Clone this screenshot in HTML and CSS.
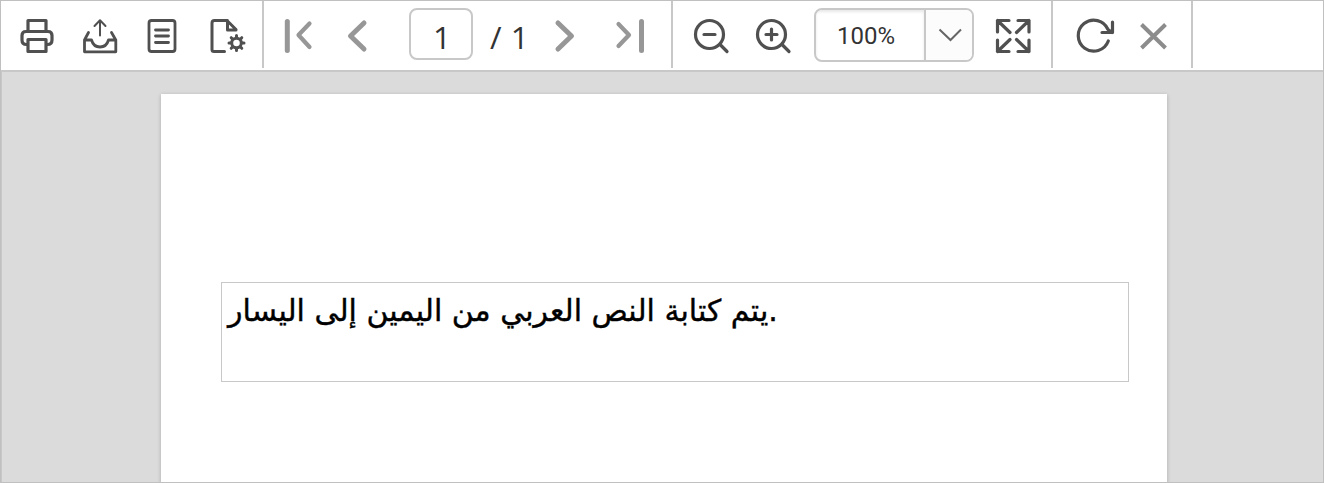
FILE: index.html
```
<!DOCTYPE html>
<html lang="en">
<head>
<meta charset="utf-8">
<title>Report Viewer</title>
<link rel="stylesheet" href="styles.css">
</head>
<body>
<div class="viewer">
  <div class="toolbar">
    <div class="group group-document">
      <svg class="icon" viewBox="0 0 40 40"><path d="M11 15V4.500H29V15M11 28.500H9.500Q5 28.500 5 24V19.500Q5 15.500 9 15.500H31Q35 15.500 35 19.500V24Q35 28.500 30.500 28.500H29M11 23.500H29V35.500H11Z"/></svg>
      <svg class="icon export" viewBox="0 0 40 40"><path d="M8.500 16.500L4.500 24V35.800H35.800V24L31.500 16.500M4.500 24H11.500Q13.500 31 20 31Q26.500 31 28.500 24H35.500"/><path class="thin" d="M20 19.500V5M14.500 10L20 4.300L25.500 10"/></svg>
      <svg class="icon params" viewBox="0 0 40 40"><rect x="7" y="4.500" width="26" height="31" rx="2.500"/><path d="M13.500 14H26.500M13.500 20H26.500M13.500 26.500H26.500"/></svg>
      <svg class="icon setup" viewBox="0 0 40 40"><path d="M16.500 35.500H6Q4 35.500 4 33.500V7Q4 4.500 6.500 4.500H19L28 13.500V14H19.500V4.500"/><circle cx="28.500" cy="27" r="4.800"/><path d="M28.500 21.500V19.500M28.500 32.500V34.500M23 27H21M34 27H36M24.600 23.100L23.200 21.700M32.400 23.100L33.800 21.700M24.600 30.900L23.200 32.300M32.400 30.900L33.800 32.300"/></svg>
    </div>
    <div class="group group-pages">
      <svg class="icon nav first" viewBox="0 0 40 40"><path class="bar" d="M9.300 5.500V34.500"/><path d="M31.500 7.500L20.500 19L31.500 31"/></svg>
      <svg class="icon nav wide prev" viewBox="0 0 40 40"><path d="M26 7L12.500 20L26 33"/></svg>
      <div class="page-input">1</div>
      <div class="page-total">/ 1</div>
      <svg class="icon nav wide next" viewBox="0 0 40 40"><path d="M13 7L26.500 20L13 33"/></svg>
      <svg class="icon nav last" viewBox="0 0 40 40"><path d="M10.500 8L21 19L10.500 30"/><path class="bar" d="M33.500 5.500V34.500"/></svg>
    </div>
    <div class="group group-zoom">
      <svg class="icon zoom-out" viewBox="0 0 40 40"><circle cx="18.500" cy="18.500" r="14"/><path d="M13 18.500H24M29 28.500L36 35.500"/></svg>
      <svg class="icon zoom-in" viewBox="0 0 40 40"><circle cx="18.500" cy="18.500" r="14"/><path d="M13 18.500H24M18.500 13V24M29 28.500L36 35.500"/></svg>
      <div class="zoom-select">
        <span class="zoom-value">100%</span>
        <span class="zoom-arrow"><svg class="chevron" viewBox="0 0 24 14"><path d="M1.500 1.500L12.500 12L23 1.500"/></svg></span>
      </div>
      <svg class="icon fullscreen" viewBox="0 0 40 40"><path d="M16 4.500H4.500V16M4.500 4.500L17 16.500M25 4.500H36V16M36 4.500L23.500 16.500M4.500 24V35.500H16M4.500 35.500L17 23.500M36 24V35.500H25M36 35.500L23.500 23.500"/></svg>
    </div>
    <div class="group group-status">
      <svg class="icon refresh" viewBox="0 0 40 40"><path d="M33.300 25A15.500 15.500 0 1 1 33 13.500L37 16.500M37.500 6V16.500H27"/></svg>
      <svg class="icon stop" viewBox="0 0 40 40"><path d="M8.500 8.500L32.500 32M32.500 8.500L8.500 32"/></svg>
    </div>
  </div>
  <div class="canvas">
    <div class="sheet">
      <div class="textbox">يتم كتابة النص العربي من اليمين إلى اليسار.</div>
    </div>
  </div>
</div>
</body>
</html>
```
FILE: styles.css
```
* { box-sizing: border-box; }
body { margin: 0; }
.viewer {
  display: flex;
  flex-direction: column;
  height: 483px;
  overflow: hidden;
  border: 1px solid #c0c0c0;
  background: #dbdbdb;
}
.toolbar {
  display: flex;
  flex: none;
  height: 71px;
  background: #fff;
  border-bottom: 2px solid #c8c8c8;
}
.group {
  display: flex;
  align-items: center;
  height: 67px;
  padding-top: 3px;
  border-right: 2px solid #c8c8c8;
}
.group-document { width: 263px; padding-left: 16px; }
.group-pages { width: 409px; padding-left: 14px; }
.group-zoom { width: 380px; padding-left: 18px; }
.group-status { width: 140px; padding-left: 22px; }
.icon {
  flex: none;
  width: 40px;
  height: 40px;
  fill: none;
  stroke: #505050;
  stroke-width: 3.2;
  stroke-linecap: round;
  stroke-linejoin: round;
}
.thin { stroke-width: 2; }
.export { margin-left: 23px; stroke-width: 2.800; }
.params { margin-left: 22px; stroke-width: 2.800; }
.setup { margin-left: 26px; stroke-width: 3; }
.nav { stroke: #979797; stroke-width: 4.200; }
.wide { stroke-width: 5; }
.bar { stroke-width: 5; }
.prev { margin-left: 20px; }
.page-input {
  flex: none;
  width: 64px;
  height: 52px;
  margin: 0 0 4px 31px;
  padding-left: 2px;
  border: 2px solid #c8c8c8;
  border-radius: 8px;
  text-align: center;
}
.page-input, .page-total {
  font: 31.5px/50px "Open Sans", sans-serif;
  color: #333;
}
.page-input { line-height: 53px; }
.page-total { flex: none; width: 55px; margin-left: 17px; padding-top: 1px; word-spacing: 1px; white-space: nowrap; }
.last { margin-left: 23px; }
.zoom-in { margin-left: 22px; }
.zoom-select {
  display: flex;
  flex: none;
  width: 160px;
  height: 54px;
  margin: 0 0 2px 21px;
  overflow: hidden;
  border: 2px solid #c8c8c8;
  border-radius: 8px;
}
.zoom-value {
  width: 108px;
  box-shadow: inset 0 2px 3px #e8e8e8;
  font: 24px/52px Roboto, sans-serif;
  color: #333;
  text-align: center;
  padding-right: 8px;
}
.zoom-arrow {
  display: flex;
  flex: 1;
  align-items: center;
  justify-content: center;
  padding-left: 2px;
  border-left: 2px solid #c8c8c8;
  background: #fcfcfc;
}
.chevron { width: 24px; height: 14px; fill: none; stroke: #666; stroke-width: 2; }
.fullscreen { margin-left: 19px; }
.stop { margin-left: 18px; stroke: #8c8c8c; stroke-width: 4; stroke-linecap: butt; }
.canvas { flex: 1; padding: 22px 156px 0 159px; border-left: 1px solid #c8c8c8; }
.sheet {
  height: 420px;
  padding: 188px 38px 0 60px;
  background: #fff;
  box-shadow: 0 1px 4px rgba(0, 0, 0, .22);
}
.textbox {
  height: 100px;
  padding: 7px 6px;
  border: 1px solid #c8c8c8;
  font: 30px/42px "DejaVu Sans", sans-serif;
  color: #000;
  -webkit-text-stroke: .4px #000;
  white-space: nowrap;
}
```
